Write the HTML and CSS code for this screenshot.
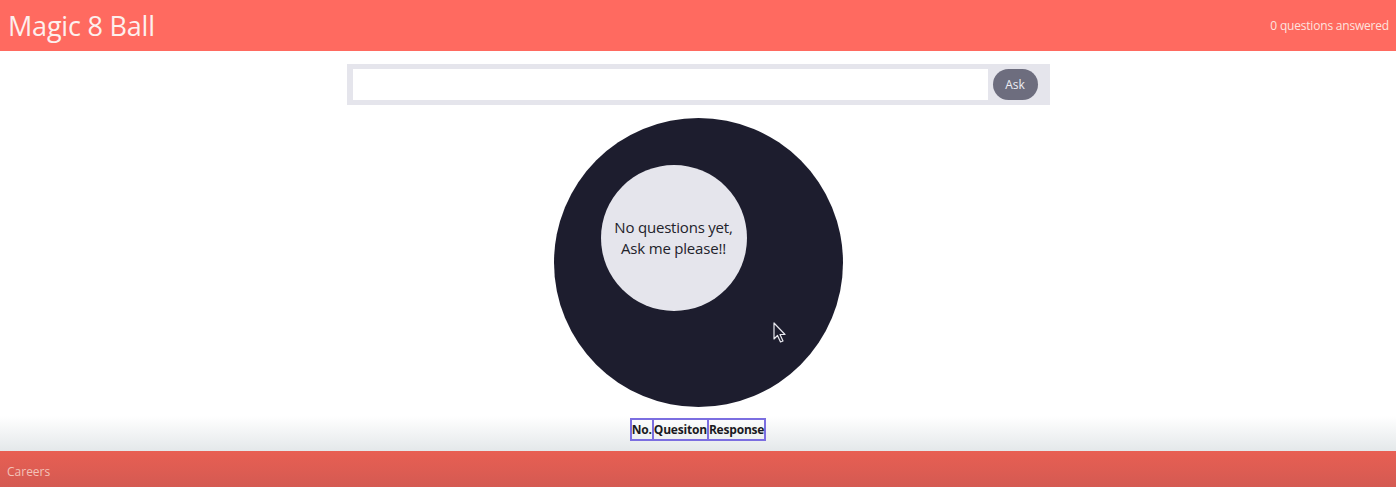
FILE: index.html
```html
<!DOCTYPE html>
<html>
<head>
<meta charset="utf-8">
<title>Magic 8 Ball</title>
<link rel="stylesheet" href="styles.css">
</head>
<body>
<header class="topbar">
  <h1 class="title">Magic 8 Ball</h1>
  <span class="count">0 questions answered</span>
</header>
<main class="main">
  <form class="ask-form">
    <input class="ask-input" type="text">
    <button class="ask-btn" type="button">Ask</button>
  </form>
  <div class="ball">
    <div class="window">
      <p class="answer">No questions yet,<br>Ask me please!!</p>
    </div>
    <svg class="cursor" width="14" height="22" viewBox="0 0 14 22"><path d="M1 1 L1 17 L4.5 13.5 L7.5 20 L10 19 L7 12.5 L12 12.5 Z" fill="#1d1d2e" stroke="#e8e8ee" stroke-width="1.2" stroke-linejoin="round"/></svg>
  </div>
  <table class="history">
    <tr><th>No.</th><th>Quesiton</th><th>Response</th></tr>
  </table>
</main>
<footer class="footer">
  <span class="foot-link">Careers</span>
</footer>
</body>
</html>
```
FILE: styles.css
```css
html, body {
  margin: 0;
  padding: 0;
}
body {
  font-family: "Open Sans", "Noto Sans", sans-serif;
  background: #fff;
  width: 1396px;
  height: 487px;
  overflow: hidden;
}
.topbar {
  height: 51px;
  background: #ff6a60;
  display: flex;
  align-items: center;
  justify-content: space-between;
  padding: 0 7px 0 8px;
  box-sizing: border-box;
}
.title {
  margin: 0;
  font-size: 27px;
  font-weight: 400;
  color: #fdf0ee;
  letter-spacing: -0.2px;
}
.count {
  font-size: 12px;
  color: #fde3df;
  letter-spacing: -0.2px;
}
.main {
  height: 400px;
  display: flex;
  flex-direction: column;
  align-items: center;
  background: linear-gradient(to bottom, #ffffff 0, #ffffff 365px, #e4e8ea 400px);
  box-sizing: border-box;
  padding-top: 13px;
}
.ask-form {
  margin: 0;
  width: 703px;
  height: 41px;
  box-sizing: border-box;
  padding: 5px 12px 5px 6px;
  background: #e5e5ec;
  display: flex;
  gap: 5px;
}
.ask-input {
  flex: 1;
  height: 31px;
  border: none;
  background: #fff;
  padding: 0;
  margin: 0;
  outline: none;
}
.ask-btn {
  width: 45px;
  height: 31px;
  border: none;
  border-radius: 16px;
  background: #6d6d7e;
  color: #eeeef4;
  font-family: "Open Sans", sans-serif;
  font-size: 12px;
  padding: 0;
}
.ball {
  position: relative;
  margin-top: 13px;
  width: 289px;
  height: 289px;
  border-radius: 50%;
  background: #1d1d2e;
  box-sizing: border-box;
  padding: 47px;
}
.window {
  width: 146px;
  height: 146px;
  border-radius: 50%;
  background: #e5e5ec;
  display: flex;
  align-items: center;
  justify-content: center;
}
.answer {
  margin: 0;
  text-align: center;
  font-size: 15px;
  line-height: 21px;
  color: #22222a;
  letter-spacing: -0.2px;
}
.cursor {
  position: absolute;
  left: 219px;
  top: 204px;
}
.history {
  margin-top: 11px;
  border: 1px solid #7b6ee0;
  border-spacing: 0;
  border-collapse: separate;
}
.history th {
  border: 1px solid #7b6ee0;
  font-size: 12px;
  font-weight: 700;
  color: #1a1a22;
  padding: 1px 0;
  height: 16px;
  letter-spacing: -0.2px;
}
.footer {
  height: 36px;
  background: linear-gradient(to bottom, #e85f53, #d45a52);
  display: flex;
  align-items: center;
  padding: 4px 0 0 7px;
  box-sizing: border-box;
}
.foot-link {
  font-size: 12px;
  color: #f3c2b8;
}
```
